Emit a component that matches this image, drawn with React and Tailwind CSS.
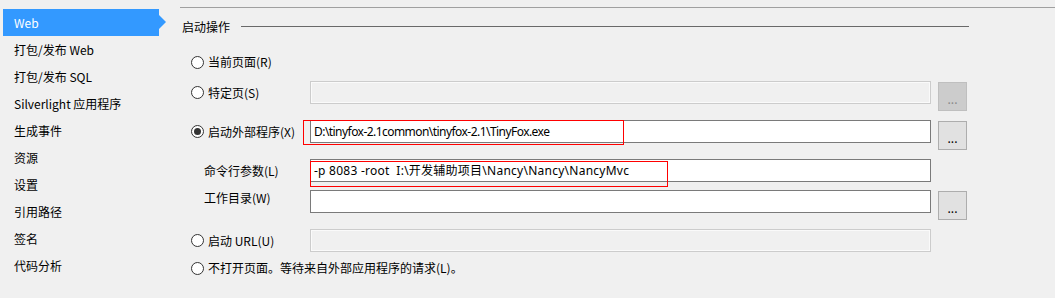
import React from 'react';

const font = { fontFamily: '"Noto Sans CJK SC", "Noto Sans", sans-serif' };
const inputFont = { fontFamily: '"Noto Sans", "Noto Sans CJK SC", sans-serif' };

const navItems = [
  '生成',
  'Web',
  '打包/发布 Web',
  '打包/发布 SQL',
  'Silverlight 应用程序',
  '生成事件',
  '资源',
  '设置',
  '引用路径',
  '签名',
  '代码分析',
];

function Radio({ checked }) {
  return (
    <span className="w-[13px] h-[13px] rounded-full border border-[#333333] bg-white flex items-center justify-center shrink-0">
      {checked && <span className="w-[7px] h-[7px] rounded-full bg-[#333333]" />}
    </span>
  );
}

function Browse({ disabled }) {
  return (
    <div
      className={
        'w-[29px] h-[29px] mt-[1px] ml-[7px] border flex items-center justify-center text-[12px] leading-none pt-[4px] ' +
        (disabled ? 'bg-[#cccccc] border-[#bfbfbf] text-[#8a8a8a]' : 'bg-[#e1e1e1] border-[#adadad] text-black')
      }
    >
      ...
    </div>
  );
}

function TextBox({ value, disabled, tracking = '' }) {
  return (
    <div
      className={
        'w-[621px] h-[23px] border flex items-center pl-[3px] text-[12px] text-black whitespace-pre ' +
        tracking +
        (disabled ? ' border-[#cccccc] bg-[#f0f0f0] shadow-[inset_0_0_0_1px_#fafafa]' : ' border-[#7a7a7a] bg-white')
      }
      style={inputFont}
    >
      {value}
    </div>
  );
}

function RadioLabel({ checked, children }) {
  return (
    <div className="w-[130px] h-[23px] pl-[11px] flex items-center gap-[4px] shrink-0">
      <Radio checked={checked} />
      <span>{children}</span>
    </div>
  );
}

function PlainLabel({ children }) {
  return (
    <div className="w-[130px] h-[20px] pl-[24px] flex items-center shrink-0">
      <span>{children}</span>
    </div>
  );
}

export default function App() {
  return (
    <div className="w-[1055px] h-[298px] bg-[#f0f0f0] flex overflow-hidden text-[12px] text-black" style={font}>
      {/* left navigation */}
      <div className="w-[180px] shrink-0 mt-[-18px]">
        {navItems.map((item, i) =>
          item === 'Web' ? (
            <div key={item} className="relative ml-[3px] w-[156px] h-[27px] bg-[#3399ff] text-white pl-[11px] flex items-center">
              {item}
              <span className="absolute left-full top-[6px] w-0 h-0 border-y-[7px] border-y-transparent border-l-[7px] border-l-[#3399ff]" />
            </div>
          ) : (
            <div key={item} className={'h-[27px] pl-[14px] flex items-center' + (i === 0 ? ' pb-[5px]' : '')}>
              {item}
            </div>
          )
        )}
      </div>

      {/* right panel */}
      <div className="flex-1 mt-[7px] border-t border-[#a0a0a0]">
        <div className="w-[789px] h-[20px] mt-[9px] pl-[2px] flex items-center">
          <span>启动操作</span>
          <span className="flex-1 ml-[11px] mt-[-1px] border-t border-[#696969]" />
        </div>

        <div className="mt-[15px] h-[20px] flex items-center">
          <RadioLabel>当前页面(R)</RadioLabel>
        </div>

        <div className="mt-[9px] h-[39px] flex items-start">
          <RadioLabel>特定页(S)</RadioLabel>
          <TextBox disabled value="" />
          <Browse disabled />
        </div>

        <div className="relative h-[39px] flex items-start">
          <RadioLabel checked>启动外部程序(X)</RadioLabel>
          <TextBox value="D:\tinyfox-2.1common\tinyfox-2.1\TinyFox.exe" tracking="tracking-[-0.55px]" />
          <Browse />
          <div className="absolute left-[123px] top-0 w-[321px] h-[25px] border border-[#ff0000]" />
        </div>

        <div className="relative h-[31px] flex items-start">
          <div className="h-[23px] flex items-center">
            <PlainLabel>命令行参数(L)</PlainLabel>
          </div>
          <TextBox value="-p 8083 -root  I:\开发辅助项目\Nancy\Nancy\NancyMvc" tracking="tracking-[0.25px]" />
          <div className="absolute left-[130px] top-[2px] w-[358px] h-[26px] border border-[#ff0000]" />
        </div>

        <div className="h-[39px] flex items-start">
          <div className="h-[16px] flex items-center">
            <PlainLabel>工作目录(W)</PlainLabel>
          </div>
          <TextBox value="" />
          <Browse />
        </div>

        <div className="h-[29px] flex items-start">
          <RadioLabel>启动 URL(U)</RadioLabel>
          <TextBox disabled value="" />
        </div>

        <div className="h-[20px] pl-[11px] flex items-center gap-[4px]">
          <Radio />
          <span>不打开页面。等待来自外部应用程序的请求(L)。</span>
        </div>
      </div>
    </div>
  );
}
